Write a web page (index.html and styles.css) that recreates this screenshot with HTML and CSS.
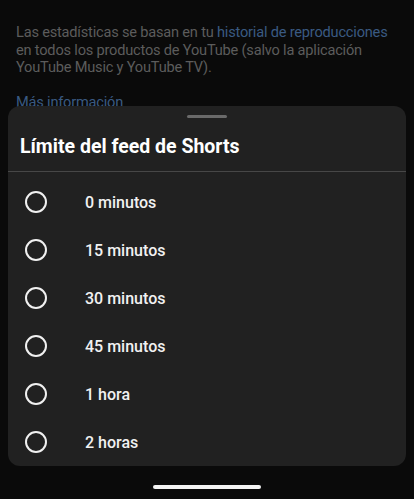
FILE: index.html
```html
<!DOCTYPE html>
<html lang="es">
<head>
    <meta charset="UTF-8">
    <meta name="viewport" content="width=device-width, initial-scale=1.0">
    <title>Límite del feed de Shorts</title>
    <link rel="stylesheet" href="styles.css">
</head>
<body>
    <div class="screen">
        <div class="backdrop">
            <p class="stats-text">
                Las estadísticas se basan en tu <a href="#">historial de reproducciones</a><br>
                en todos los productos de YouTube (salvo la aplicación<br>
                YouTube Music y YouTube TV).
            </p>
            <a href="#" class="more-link">Más información</a>
        </div>

        <div class="sheet">
            <div class="handle"></div>
            <h2 class="sheet-title">Límite del feed de Shorts</h2>
            <ul class="options">
                <li class="option"><span class="radio"></span>0 minutos</li>
                <li class="option"><span class="radio"></span>15 minutos</li>
                <li class="option"><span class="radio"></span>30 minutos</li>
                <li class="option"><span class="radio"></span>45 minutos</li>
                <li class="option"><span class="radio"></span>1 hora</li>
                <li class="option"><span class="radio"></span>2 horas</li>
            </ul>
        </div>

        <div class="nav-bar">
            <div class="nav-pill"></div>
        </div>
    </div>
</body>
</html>
```

FILE: styles.css
```css
body, html {
    margin: 0;
    padding: 0;
    height: 100%;
    background-color: #0a0a0a;
    font-family: Roboto, "Liberation Sans", sans-serif;
}
.screen {
    display: flex;
    flex-direction: column;
    height: 499px;
    overflow: hidden;
}
.backdrop {
    padding: 24px 16px 0 16px;
    height: 82px;
    color: #5c5c5c;
    font-size: 14.6px;
    letter-spacing: -0.2px;
    line-height: 17.5px;
    white-space: nowrap;
}
.stats-text {
    margin: 0 0 17px 0;
}
.stats-text a, .more-link {
    color: #3a5a82;
    text-decoration: none;
}
.sheet {
    margin: 0 8px;
    background-color: #212121;
    border-radius: 12px;
    height: 360px;
    display: flex;
    flex-direction: column;
}
.handle {
    width: 40px;
    height: 4px;
    border-radius: 2px;
    background-color: #6a6a6a;
    margin: 9px auto 0 auto;
}
.sheet-title {
    margin: 0;
    padding: 17px 12px 0 12px;
    height: 41px;
    border-bottom: 1px solid #474747;
    color: #ffffff;
    font-size: 19.5px;
    font-weight: 700;
    line-height: 24px;
}
.options {
    list-style: none;
    margin: 0;
    padding: 6px 0 0 0;
}
.option {
    display: flex;
    align-items: center;
    height: 48px;
    color: #f1f1f1;
    font-size: 16px;
    font-weight: 500;
}
.radio {
    box-sizing: border-box;
    width: 22px;
    height: 22px;
    border: 2px solid #f1f1f1;
    border-radius: 50%;
    margin: 0 38px 0 17px;
}
.nav-bar {
    flex: 1;
    display: flex;
    justify-content: center;
    align-items: center;
    padding-top: 8px;
}
.nav-pill {
    width: 108px;
    height: 4px;
    border-radius: 2px;
    background-color: #f4f4f4;
}
```
